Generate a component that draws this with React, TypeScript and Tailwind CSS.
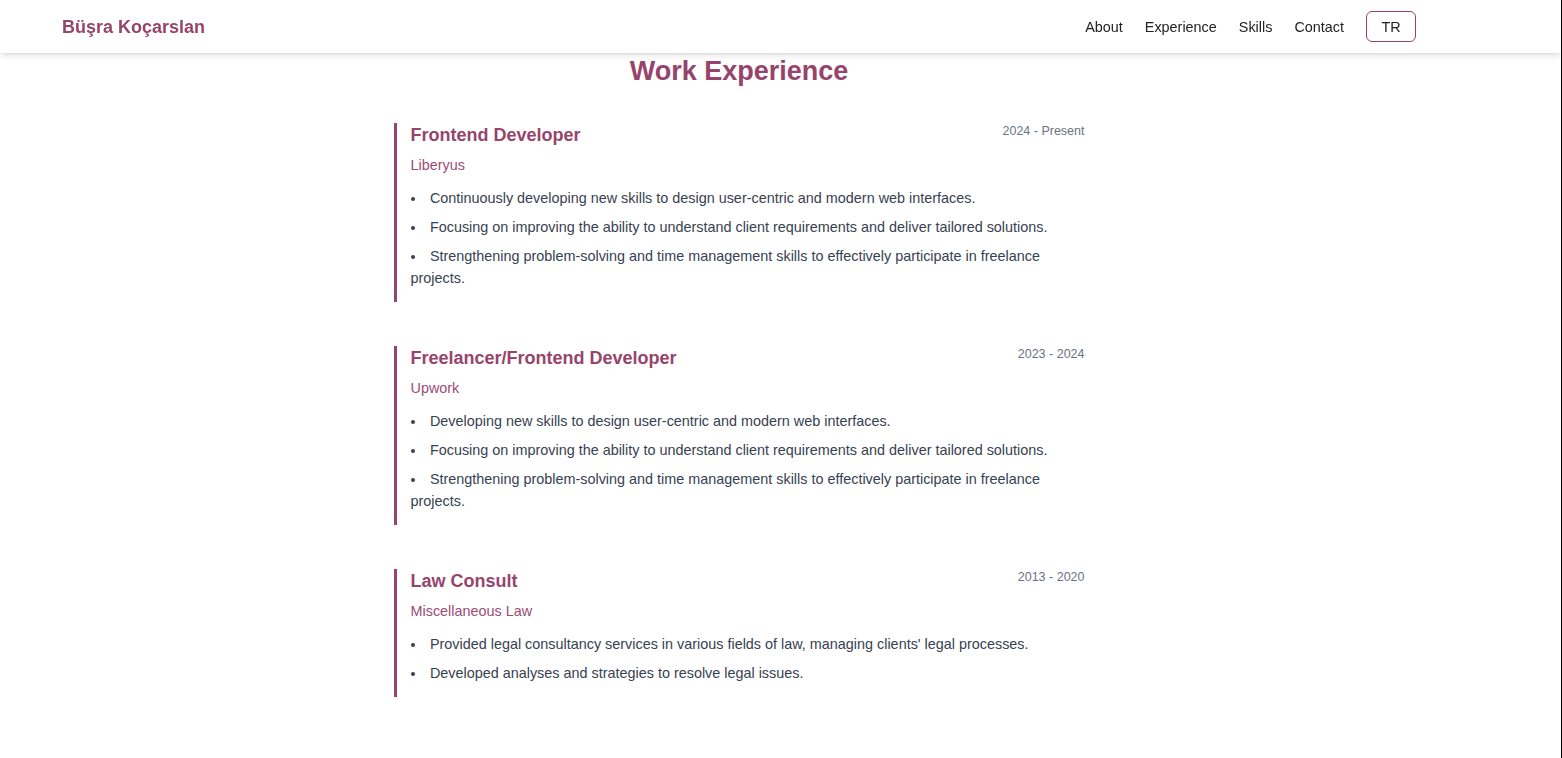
import React from 'react';

interface Job {
  title: string;
  company: string;
  period: string;
  points: string[];
}

const jobs: Job[] = [
  {
    title: 'Frontend Developer',
    company: 'Liberyus',
    period: '2024 - Present',
    points: [
      'Continuously developing new skills to design user-centric and modern web interfaces.',
      'Focusing on improving the ability to understand client requirements and deliver tailored solutions.',
      'Strengthening problem-solving and time management skills to effectively participate in freelance projects.',
    ],
  },
  {
    title: 'Freelancer/Frontend Developer',
    company: 'Upwork',
    period: '2023 - 2024',
    points: [
      'Developing new skills to design user-centric and modern web interfaces.',
      'Focusing on improving the ability to understand client requirements and deliver tailored solutions.',
      'Strengthening problem-solving and time management skills to effectively participate in freelance projects.',
    ],
  },
  {
    title: 'Law Consult',
    company: 'Miscellaneous Law',
    period: '2013 - 2020',
    points: [
      "Provided legal consultancy services in various fields of law, managing clients' legal processes.",
      'Developed analyses and strategies to resolve legal issues.',
    ],
  },
];

const navLinks = ['About', 'Experience', 'Skills', 'Contact'];

const App: React.FC = () => {
  return (
    <div
      className="min-h-screen bg-white border-r border-black"
      style={{ fontFamily: '"Liberation Sans", Arial, sans-serif' }}
    >
      {/* fixed top bar */}
      <header className="fixed top-0 left-0 right-[1px] z-10 h-[53px] bg-white shadow-md">
        <div className="w-[1478px] h-full px-[62px] flex items-center justify-between">
          <span className="text-[18px] leading-[28px] font-bold text-[#96446c]">Büşra Koçarslan</span>
          <nav className="flex items-center gap-[22px] text-[14.4px] leading-[20px] text-[#222]">
            {navLinks.map((link) => (
              <a key={link} href={`#${link.toLowerCase()}`}>
                {link}
              </a>
            ))}
            <button className="w-[50px] h-[31px] border border-[#96446c] rounded-[6px] text-[14.4px] text-[#222]">
              TR
            </button>
          </nav>
        </div>
      </header>

      <main className="w-[1478px] pt-[55px] pb-[60px]">
        <h2 className="text-center text-[27px] leading-[32px] font-bold text-[#96446c] mb-[36px]">
          Work Experience
        </h2>

        <div className="w-[691px] mx-auto flex flex-col gap-[44px]">
          {jobs.map((job, idx) => (
            <div key={idx} className="border-l-[3px] border-[#96446c] pl-[14px] pb-[12.5px]">
              <div className="flex justify-between items-start">
                <h3 className="text-[18px] leading-[24px] font-bold text-[#96446c]">{job.title}</h3>
                <span className="text-[12.5px] leading-[16px] text-[#6b7280]">{job.period}</span>
              </div>
              <div className="mt-2 text-[14.4px] leading-[20px] text-[#9c4c75]">{job.company}</div>
              <ul className="mt-3 list-disc list-inside space-y-[6.4px] text-[14.4px] leading-[22.4px] text-[#374151]">
                {job.points.map((p, i) => (
                  <li key={i}>{p}</li>
                ))}
              </ul>
            </div>
          ))}
        </div>
      </main>
    </div>
  );
};

export default App;
